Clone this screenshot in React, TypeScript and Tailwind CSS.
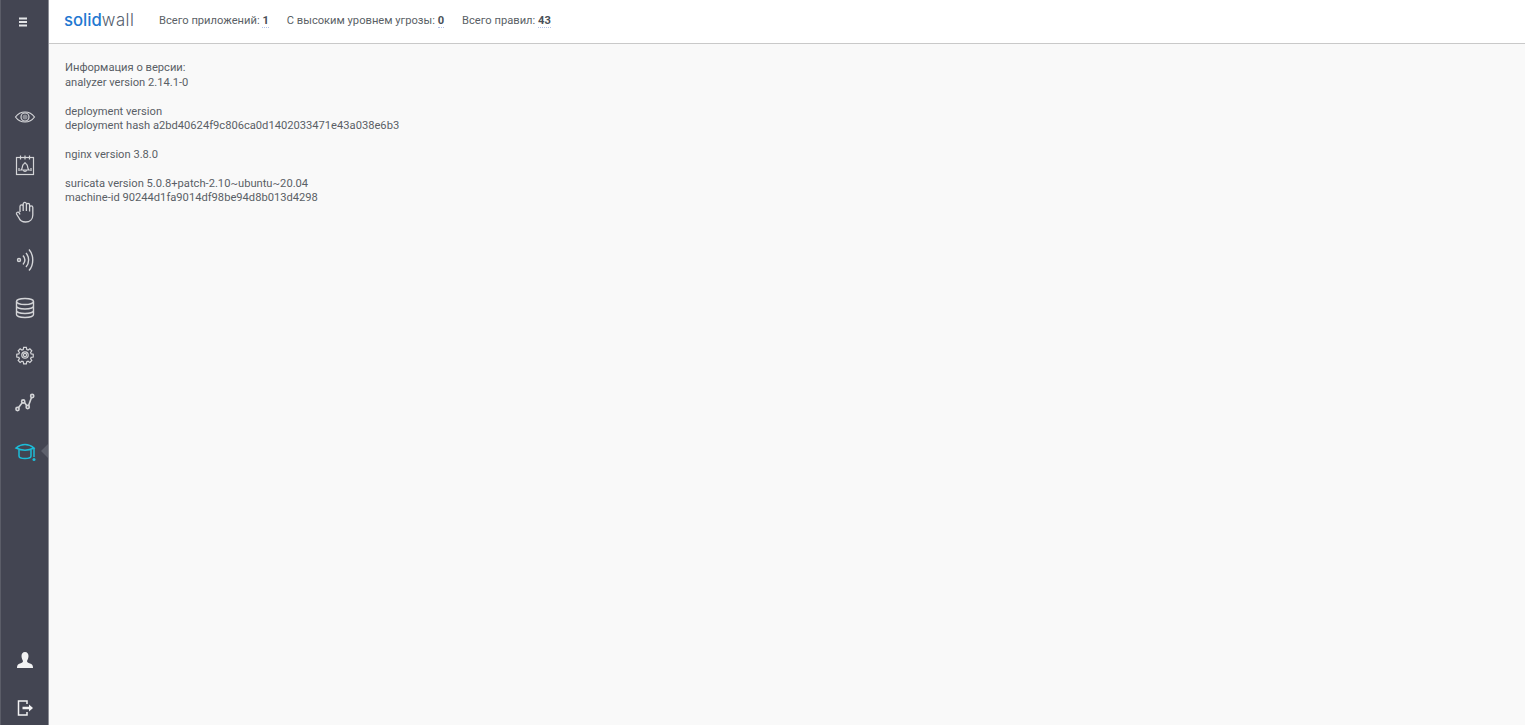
const versionLines = [
  'Информация о версии:',
  'analyzer version 2.14.1-0',
  '',
  'deployment version',
  'deployment hash a2bd40624f9c806ca0d1402033471e43a038e6b3',
  '',
  'nginx version 3.8.0',
  '',
  'suricata version 5.0.8+patch-2.10~ubuntu~20.04',
  'machine-id 90244d1fa9014df98be94d8b013d4298',
];

const stats = [
  { label: 'Всего приложений:', value: '1' },
  { label: 'С высоким уровнем угрозы:', value: '0' },
  { label: 'Всего правил:', value: '43' },
];

function NavIcon({ children, active }: { children: React.ReactNode; active?: boolean }) {
  return (
    <div className="relative flex h-[47.7px] items-center justify-center">
      <svg
        width="24"
        height="24"
        viewBox="0 0 24 24"
        fill="none"
        stroke="currentColor"
        strokeWidth="1.2"
        className={active ? 'text-[#1cbcd8]' : 'text-[#d4d5d8]'}
      >
        {children}
      </svg>
      {active && (
        <span className="absolute right-0 top-1/2 h-0 w-0 -translate-y-1/2 border-y-[7px] border-r-[7px] border-y-transparent border-r-[#5e616d]" />
      )}
    </div>
  );
}

export default function App() {
  return (
    <div className="flex h-screen bg-[#f9f9f9] font-['Roboto',sans-serif] text-[11.17px] text-[#5a5f66]">
      <aside className="flex w-[49px] shrink-0 flex-col border-x border-l-[#5b5d68] border-r-[#8c8e96] bg-[#434552] text-white">
        <div className="flex h-[43px] items-center justify-center pr-[3px]">
          <svg width="10" height="10" viewBox="0 0 10 10" fill="#e4e5e7">
            <rect x="1" y="0.5" width="8" height="2" />
            <rect x="1" y="4" width="8" height="2" />
            <rect x="1" y="7.5" width="8" height="2" />
          </svg>
        </div>
        <nav className="mt-[50px] flex flex-col">
          <NavIcon>
            <path d="M2.500 12C5 8.500 8.300 7 12 7s7 1.500 9.500 5c-2.500 3.500-5.800 5-9.500 5s-7-1.500-9.500-5z" />
            <circle cx="12" cy="12" r="4" />
            <circle cx="12" cy="12" r="2.500" fill="currentColor" stroke="none" opacity="0.5" />
          </NavIcon>
          <NavIcon>
            <rect x="3.500" y="4.500" width="17" height="17" />
            <path d="M7.500 2.500v4M12 2.500v4M16.500 2.500v4" />
            <path d="M8 17c1.300-1 1.200-2.500 1.500-3.800.4-1.700 1.300-2.700 2.500-2.700s2.100 1 2.500 2.700c.3 1.300.2 2.800 1.500 3.800zM10.500 17a1.500 1.500 0 0 0 3 0M12 9v1.500" />
            <path d="M6 15v3M18 15v3" />
          </NavIcon>
          <NavIcon>
            <path d="M7 12V6.500a1.600 1.600 0 0 1 3.200 0V11M10.200 11V4a1.600 1.600 0 0 1 3.200 0V11M13.400 11V5a1.600 1.600 0 0 1 3.200 0V11M16.600 11.500V7.500a1.600 1.600 0 0 1 3.200 0V15c0 4-2.800 7-7.300 7-3.500 0-5.500-1.500-6.500-4L3.500 14c-.5-1.600 1.800-2.800 2.800-1L7 14.500" strokeWidth="1.300" />
          </NavIcon>
          <NavIcon>
            <g strokeWidth="1.400">
              <circle cx="6" cy="12" r="1.500" />
              <path d="M10 7.500c2.300 2.700 2.300 6.300 0 9M13 5c3.500 4 3.500 10 0 14M16 1.500c5 5.500 5 15.500 0 21" />
            </g>
          </NavIcon>
          <NavIcon>
            <g strokeWidth="1.400">
              <ellipse cx="12" cy="5.500" rx="8.500" ry="3" />
              <path d="M3.500 5.500v13c0 1.700 3.800 3 8.500 3s8.500-1.300 8.500-3v-13M3.500 10c0 1.700 3.800 3 8.500 3s8.500-1.300 8.500-3M3.500 14.500c0 1.700 3.800 3 8.500 3s8.500-1.300 8.500-3" />
            </g>
          </NavIcon>
          <NavIcon>
            <g transform="translate(12 12) scale(.8) translate(-12 -12.5)" strokeWidth="1.500">
              <path d="M10.300 3h3.400l.5 2.600 1.700.7 2.200-1.500 2.400 2.400-1.500 2.200.7 1.700 2.600.5v3.400l-2.600.5-.7 1.700 1.500 2.200-2.400 2.400-2.200-1.500-1.700.7-.5 2.600h-3.400l-.5-2.600-1.700-.7-2.200 1.500-2.400-2.400 1.500-2.200-.7-1.700-2.600-.5v-3.400l2.600-.5.7-1.700-1.500-2.200 2.400-2.400 2.200 1.500 1.700-.7z" />
              <circle cx="12" cy="12.500" r="4" />
              <circle cx="12" cy="12.500" r="2" />
            </g>
          </NavIcon>
          <NavIcon>
            <g strokeWidth="1.600">
              <path d="M5.200 17l4-5.200M11.500 11.500l2.300 3.300M15.500 14.800l3-8.300" />
              <circle cx="4.500" cy="18" r="1.600" />
              <circle cx="10.200" cy="10.500" r="1.600" />
              <circle cx="14.700" cy="16" r="1.600" />
              <circle cx="19.200" cy="5" r="1.600" />
            </g>
          </NavIcon>
          <NavIcon active>
            <g strokeWidth="1.500">
              <path d="M3 9c3-2.500 6-3.500 9-3.500S18 6.500 21 9c-3 1.500-6 2.200-9 2.200S6 10.500 3 9z" />
              <path d="M6 11v6c0 1.500 2.500 2.500 6 2.500s6-1 6-2.500v-6" />
              <path d="M21 9v9" />
            </g>
            <circle cx="21" cy="20.500" r="1.500" fill="currentColor" stroke="none" />
          </NavIcon>
        </nav>
        <div className="mt-auto flex flex-col">
          <div className="flex h-[62px] items-center justify-center">
            <svg width="18" height="18" viewBox="0 0 18 18" fill="#f2f2f3">
              <path d="M9 1c2.300 0 3.500 1.700 3.500 4S11.500 9 11 10c0 1.300 1 1.700 3 2.500 1.800.7 3 1.500 3 4V17H1v-.5c0-2.500 1.200-3.300 3-4 2-.8 3-1.200 3-2.500-.5-1-1.500-2.700-1.500-5S6.700 1 9 1z" />
            </svg>
          </div>
          <div className="flex h-[34px] items-center justify-center">
            <svg width="18" height="18" viewBox="0 0 18 18" fill="none" stroke="#f2f2f3" strokeWidth="1.500">
              <path d="M11 5V2H2.500v14H11v-3" />
              <path d="M6.500 9h7" strokeWidth="2.500" />
              <path d="M13 5.500L17 9l-4 3.500z" fill="#f2f2f3" stroke="none" />
            </svg>
          </div>
        </div>
      </aside>
      <div className="flex min-w-0 flex-1 flex-col">
        <header className="flex h-[44px] items-center border-b border-[#c9c9c9] bg-white pl-[15px]">
          <div className="mb-[2px] w-[95px] font-['Inter',sans-serif] text-[16.7px] leading-none">
            <span className="font-medium text-[#1f78d1]">solid</span>
            <span className="font-light tracking-[0.5px] text-[#55606e]">wall</span>
          </div>
          <div className="mb-[1px] flex gap-[18px]">
            {stats.map(stat => (
              <span key={stat.label}>
                {stat.label}{' '}
                <b className="border-b border-dotted border-[#b4c2e8] font-bold text-[#4a4f57]">{stat.value}</b>
              </span>
            ))}
          </div>
        </header>
        <main className="px-4 pt-[17.4px] leading-[14.4px]">
          {versionLines.map((line, i) => (
            <div key={i} className="h-[14.4px]">
              {line}
            </div>
          ))}
        </main>
      </div>
    </div>
  );
}
